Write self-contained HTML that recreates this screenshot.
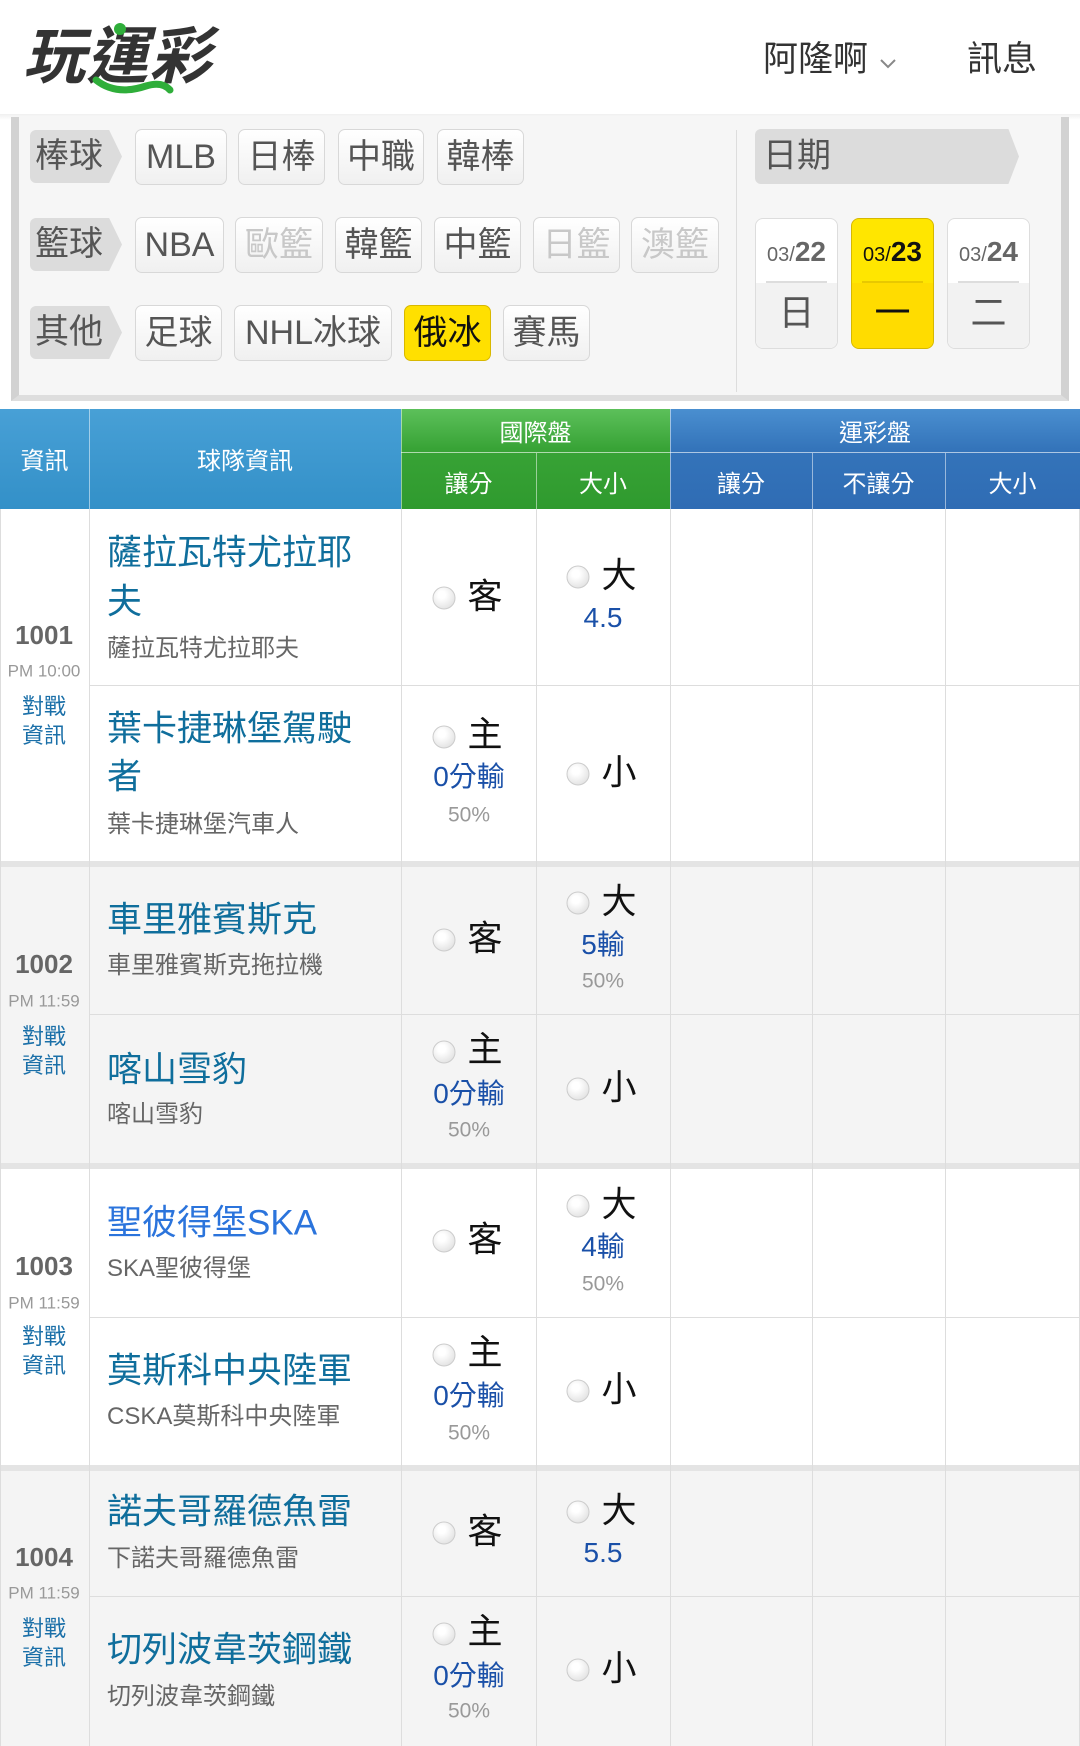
<!DOCTYPE html>
<html><head><meta charset="utf-8">
<style>
*{margin:0;padding:0;box-sizing:border-box}
body{width:1080px;height:1746px;background:#fff;position:relative;overflow:hidden;font-family:"Liberation Sans","Noto Sans CJK TC",sans-serif}
.a{position:absolute;white-space:nowrap;line-height:1}
.btn{position:absolute;height:56px;border:1px solid #d8d8d8;border-radius:7px;background:linear-gradient(#fff,#f0f0f0);color:#555;font-size:34px;text-align:center;line-height:54px}
.dis{color:#c8c8c8}
.tag{position:absolute;height:53px;width:92px;background:#dcdcdc;color:#555;font-size:34px;line-height:53px;padding-left:5px;clip-path:polygon(0 0,86% 0,100% 50%,86% 100%,0 100%);border-radius:6px}
.date{position:absolute;top:218px;width:83px;height:131px;border:1px solid #ddd;border-radius:8px;background:#fff;overflow:hidden}
.date .d{height:64px;line-height:66px;text-align:center;font-size:20px;color:#666}
.date .d b{font-size:28px}
.date .w{position:absolute;top:62px;left:10px;right:10px;border-top:2px solid #ddd}
.date .l{position:absolute;top:64px;left:0;right:0;bottom:0;background:#f2f2f2;text-align:center;font-size:36px;color:#555;line-height:60px}
.hd{position:absolute;color:#fff;font-size:24px;text-align:center}
.vl{position:absolute;width:1px;background:#ddd}
.hl{position:absolute;left:0;width:1080px;height:1px;background:#ddd}
.sep{position:absolute;left:0;width:1080px;height:6px;background:#e4e4e4}
.nm{position:absolute;left:107px;font-size:35px;color:#0f6e9c;line-height:1;transform:translateY(-50%);white-space:nowrap}
.sb{position:absolute;left:107px;font-size:24px;color:#666;line-height:1;transform:translateY(-50%);white-space:nowrap}
.no{position:absolute;left:44px;transform:translate(-50%,-50%);font-size:26px;color:#666;font-weight:bold;line-height:1}
.tm{position:absolute;left:44px;transform:translate(-50%,-50%);font-size:17px;color:#999;white-space:nowrap;line-height:1}
.vs{position:absolute;left:44px;transform:translate(-50%,-50%);font-size:22px;color:#1a6fa8;line-height:1;white-space:nowrap}
.rd{position:absolute;width:23px;height:23px;border-radius:50%;border:1px solid #ccc;background:radial-gradient(circle at 40% 35%,#fff 20%,#ddd 90%);transform:translate(-50%,-50%)}
.ch{position:absolute;font-size:35px;color:#111;transform:translate(-50%,-50%);line-height:1}
.od{position:absolute;font-size:28px;color:#1a50a8;transform:translate(-50%,-50%);line-height:1;white-space:nowrap}
.pc{position:absolute;font-size:21px;color:#999;transform:translate(-50%,-50%);line-height:1}
</style></head><body>

<!-- header -->
<div class="a" style="left:30px;top:20px;font-size:62px;font-weight:bold;color:#333;transform:skewX(-14deg);letter-spacing:1px;font-family:'Noto Sans CJK TC',sans-serif">玩運彩</div>
<svg class="a" style="left:84px;top:20px" width="110" height="80"><circle cx="36" cy="9" r="6" fill="#2fae3a"/><path d="M12 60 Q32 76 62 66 Q78 61 86 70" stroke="#2fae3a" stroke-width="7" fill="none" stroke-linecap="round"/></svg>
<div class="a" style="left:763px;top:42px;font-size:35px;color:#333">阿隆啊</div>
<svg class="a" style="left:879px;top:58px" width="18" height="12"><path d="M2 2 L9 9 L16 2" stroke="#888" stroke-width="2" fill="none"/></svg>
<div class="a" style="left:967px;top:42px;font-size:35px;color:#333">訊息</div>
<div class="a" style="left:0;top:114px;width:1080px;height:6px;background:linear-gradient(#f0f0f0,#fff)"></div>

<!-- filter panel -->
<div class="a" style="left:11px;top:117px;width:1058px;height:284px;background:#f6f6f6;border-left:8px solid #d2d2d2;border-right:8px solid #d2d2d2;border-bottom:6px solid #dedede"></div>
<div class="tag" style="left:30px;top:130px">棒球</div>
<div class="btn" style="left:135px;top:129px;width:92px">MLB</div>
<div class="btn" style="left:238px;top:129px;width:87px">日棒</div>
<div class="btn" style="left:338px;top:129px;width:86px">中職</div>
<div class="btn" style="left:437px;top:129px;width:87px">韓棒</div>

<div class="tag" style="left:30px;top:218px">籃球</div>
<div class="btn" style="left:135px;top:217px;width:89px">NBA</div>
<div class="btn dis" style="left:235px;top:217px;width:88px">歐籃</div>
<div class="btn" style="left:335px;top:217px;width:87px">韓籃</div>
<div class="btn" style="left:434px;top:217px;width:87px">中籃</div>
<div class="btn dis" style="left:533px;top:217px;width:87px">日籃</div>
<div class="btn dis" style="left:631px;top:217px;width:88px">澳籃</div>

<div class="tag" style="left:30px;top:306px">其他</div>
<div class="btn" style="left:135px;top:305px;width:87px">足球</div>
<div class="btn" style="left:234px;top:305px;width:158px">NHL冰球</div>
<div class="btn" style="left:404px;top:305px;width:87px;background:#ffe000;border-color:#d8b800;color:#111">俄冰</div>
<div class="btn" style="left:503px;top:305px;width:87px">賽馬</div>

<div class="a" style="left:736px;top:130px;width:1px;height:262px;background:#ddd"></div>
<div class="tag" style="left:755px;top:129px;width:264px;height:55px;line-height:55px;padding-left:8px;clip-path:polygon(0 0,96% 0,100% 50%,96% 100%,0 100%)">日期</div>
<div class="date" style="left:755px"><div class="d">03/<b>22</b></div><div class="l">日</div><div class="w"></div></div>
<div class="date" style="left:851px;background:#ffe600;border-color:#d6b800"><div class="d" style="color:#111">03/<b>23</b></div><div class="l" style="background:#ffdc00;color:#111">一</div><div class="w" style="border-color:#e8c800"></div></div>
<div class="date" style="left:947px"><div class="d">03/<b>24</b></div><div class="l">二</div><div class="w"></div></div>

<!-- table header -->
<div class="a" style="left:0;top:409px;width:401px;height:100px;background:linear-gradient(#48a0d6,#3390c8)"></div>
<div class="a" style="left:401px;top:409px;width:269px;height:100px;background:linear-gradient(#5cc05a,#38a336 40%,#2f9a2e)"></div>
<div class="a" style="left:670px;top:409px;width:410px;height:100px;background:linear-gradient(#4a8fd0,#3474ba 40%,#2f6cb4)"></div>
<div class="a" style="left:401px;top:452px;width:679px;height:1px;background:rgba(255,255,255,.6)"></div>
<div class="a" style="left:89px;top:409px;width:1px;height:100px;background:rgba(255,255,255,.5)"></div>
<div class="a" style="left:401px;top:409px;width:1px;height:100px;background:rgba(255,255,255,.5)"></div>
<div class="a" style="left:670px;top:409px;width:1px;height:100px;background:rgba(255,255,255,.5)"></div>
<div class="a" style="left:536px;top:453px;width:1px;height:56px;background:rgba(255,255,255,.5)"></div>
<div class="a" style="left:812px;top:453px;width:1px;height:56px;background:rgba(255,255,255,.5)"></div>
<div class="a" style="left:945px;top:453px;width:1px;height:56px;background:rgba(255,255,255,.5)"></div>
<div class="hd" style="left:0;width:89px;top:441px">資訊</div>
<div class="hd" style="left:89px;width:312px;top:441px">球隊資訊</div>
<div class="hd" style="left:401px;width:269px;top:413px">國際盤</div>
<div class="hd" style="left:670px;width:410px;top:413px">運彩盤</div>
<div class="hd" style="left:401px;width:135px;top:464px">讓分</div>
<div class="hd" style="left:536px;width:134px;top:464px">大小</div>
<div class="hd" style="left:670px;width:142px;top:464px">讓分</div>
<div class="hd" style="left:812px;width:133px;top:464px">不讓分</div>
<div class="hd" style="left:945px;width:135px;top:464px">大小</div>

<!-- row backgrounds -->
<div class="a" style="left:0;top:867px;width:1080px;height:296px;background:#f4f4f4"></div>
<div class="a" style="left:0;top:1470px;width:1080px;height:276px;background:#f4f4f4"></div>
<div class="sep" style="top:861px"></div>
<div class="sep" style="top:1163px"></div>
<div class="sep" style="top:1465px"></div>
<div class="hl" style="left:89px;width:991px;top:685px"></div>
<div class="hl" style="left:89px;width:991px;top:1014px"></div>
<div class="hl" style="left:89px;width:991px;top:1317px"></div>
<div class="hl" style="left:89px;width:991px;top:1596px"></div>
<div class="vl" style="left:0;top:509px;height:1237px"></div>
<div class="vl" style="left:89px;top:509px;height:1237px"></div>
<div class="vl" style="left:401px;top:509px;height:1237px"></div>
<div class="vl" style="left:536px;top:509px;height:1237px"></div>
<div class="vl" style="left:670px;top:509px;height:1237px"></div>
<div class="vl" style="left:812px;top:509px;height:1237px"></div>
<div class="vl" style="left:945px;top:509px;height:1237px"></div>
<div class="vl" style="left:1079px;top:509px;height:1237px"></div>

<!-- match 1 -->
<div class="nm" style="top:553px">薩拉瓦特尤拉耶</div>
<div class="nm" style="top:602px">夫</div>
<div class="sb" style="top:649px">薩拉瓦特尤拉耶夫</div>
<div class="no" style="top:635px">1001</div>
<div class="tm" style="top:671px">PM 10:00</div>
<div class="vs" style="top:707px">對戰</div>
<div class="vs" style="top:736px">資訊</div>
<div class="rd" style="left:444px;top:598px"></div><div class="ch" style="left:485px;top:597px">客</div>
<div class="rd" style="left:578px;top:577px"></div><div class="ch" style="left:619px;top:576px">大</div>
<div class="od" style="left:603px;top:618px">4.5</div>
<div class="nm" style="top:729px">葉卡捷琳堡駕駛</div>
<div class="nm" style="top:777px">者</div>
<div class="sb" style="top:825px">葉卡捷琳堡汽車人</div>
<div class="rd" style="left:444px;top:737px"></div><div class="ch" style="left:485px;top:735px">主</div>
<div class="od" style="left:469px;top:777px">0分輸</div>
<div class="pc" style="left:469px;top:815px">50%</div>
<div class="rd" style="left:578px;top:774px"></div><div class="ch" style="left:619px;top:773px">小</div>

<!-- match 2 -->
<div class="nm" style="top:920px">車里雅賓斯克</div>
<div class="sb" style="top:966px">車里雅賓斯克拖拉機</div>
<div class="no" style="top:964px">1002</div>
<div class="tm" style="top:1001px">PM 11:59</div>
<div class="vs" style="top:1037px">對戰</div>
<div class="vs" style="top:1066px">資訊</div>
<div class="rd" style="left:444px;top:940px"></div><div class="ch" style="left:485px;top:939px">客</div>
<div class="rd" style="left:578px;top:903px"></div><div class="ch" style="left:619px;top:902px">大</div>
<div class="od" style="left:603px;top:945px">5輸</div>
<div class="pc" style="left:603px;top:981px">50%</div>
<div class="nm" style="top:1070px">喀山雪豹</div>
<div class="sb" style="top:1115px">喀山雪豹</div>
<div class="rd" style="left:444px;top:1052px"></div><div class="ch" style="left:485px;top:1050px">主</div>
<div class="od" style="left:469px;top:1094px">0分輸</div>
<div class="pc" style="left:469px;top:1130px">50%</div>
<div class="rd" style="left:578px;top:1089px"></div><div class="ch" style="left:619px;top:1088px">小</div>

<!-- match 3 -->
<div class="nm" style="top:1223px;color:#2b74dc">聖彼得堡SKA</div>
<div class="sb" style="top:1269px">SKA聖彼得堡</div>
<div class="no" style="top:1266px">1003</div>
<div class="tm" style="top:1303px">PM 11:59</div>
<div class="vs" style="top:1337px">對戰</div>
<div class="vs" style="top:1366px">資訊</div>
<div class="rd" style="left:444px;top:1241px"></div><div class="ch" style="left:485px;top:1240px">客</div>
<div class="rd" style="left:578px;top:1206px"></div><div class="ch" style="left:619px;top:1205px">大</div>
<div class="od" style="left:603px;top:1247px">4輸</div>
<div class="pc" style="left:603px;top:1284px">50%</div>
<div class="nm" style="top:1371px">莫斯科中央陸軍</div>
<div class="sb" style="top:1417px">CSKA莫斯科中央陸軍</div>
<div class="rd" style="left:444px;top:1355px"></div><div class="ch" style="left:485px;top:1353px">主</div>
<div class="od" style="left:469px;top:1396px">0分輸</div>
<div class="pc" style="left:469px;top:1433px">50%</div>
<div class="rd" style="left:578px;top:1391px"></div><div class="ch" style="left:619px;top:1390px">小</div>

<!-- match 4 -->
<div class="nm" style="top:1512px">諾夫哥羅德魚雷</div>
<div class="sb" style="top:1559px">下諾夫哥羅德魚雷</div>
<div class="no" style="top:1557px">1004</div>
<div class="tm" style="top:1593px">PM 11:59</div>
<div class="vs" style="top:1629px">對戰</div>
<div class="vs" style="top:1658px">資訊</div>
<div class="rd" style="left:444px;top:1533px"></div><div class="ch" style="left:485px;top:1532px">客</div>
<div class="rd" style="left:578px;top:1512px"></div><div class="ch" style="left:619px;top:1511px">大</div>
<div class="od" style="left:603px;top:1553px">5.5</div>
<div class="nm" style="top:1650px">切列波韋茨鋼鐵</div>
<div class="sb" style="top:1697px">切列波韋茨鋼鐵</div>
<div class="rd" style="left:444px;top:1634px"></div><div class="ch" style="left:485px;top:1632px">主</div>
<div class="od" style="left:469px;top:1676px">0分輸</div>
<div class="pc" style="left:469px;top:1711px">50%</div>
<div class="rd" style="left:578px;top:1670px"></div><div class="ch" style="left:619px;top:1669px">小</div>

</body></html>
